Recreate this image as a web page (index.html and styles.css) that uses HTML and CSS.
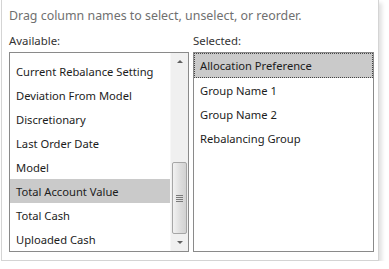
FILE: index.html
```html
<!DOCTYPE html>
<html lang="en">
<head>
  <meta charset="UTF-8" />
  <title>Column Chooser</title>
  <link rel="stylesheet" href="styles.css">
</head>
<body>

<div class="chooser">
  <p class="hint">Drag column names to select, unselect, or reorder.</p>

  <div class="columns">
    <!-- Available columns -->
    <div class="column column-available">
      <div class="column-label">Available:</div>
      <div class="listbox">
        <div class="listbox-view">
          <ul class="items items-scrolled">
            <li>Account Name</li>
            <li>Account Number</li>
            <li>Account Type</li>
            <li>Cash Available</li>
            <li>Current Rebalance Setting</li>
            <li>Deviation From Model</li>
            <li>Discretionary</li>
            <li>Last Order Date</li>
            <li>Model</li>
            <li class="active">Total Account Value</li>
            <li>Total Cash</li>
            <li>Uploaded Cash</li>
          </ul>
        </div>
        <div class="scrollbar">
          <div class="scroll-arrow up"></div>
          <div class="scroll-track">
            <div class="scroll-thumb"><span></span><span></span><span></span><span></span></div>
          </div>
          <div class="scroll-arrow down"></div>
        </div>
      </div>
    </div>

    <!-- Selected columns -->
    <div class="column column-selected">
      <div class="column-label">Selected:</div>
      <div class="listbox">
        <div class="listbox-view">
          <ul class="items">
            <li class="active focused">Allocation Preference</li>
            <li>Group Name 1</li>
            <li>Group Name 2</li>
            <li>Rebalancing Group</li>
          </ul>
        </div>
      </div>
    </div>
  </div>
</div>

</body>
</html>
```

FILE: styles.css
```css
body {
  margin: 0;
  background: #fff;
  font-family: 'Noto Sans', 'Open Sans', sans-serif;
  font-size: 12px;
  color: #222;
}

.chooser {
  box-sizing: border-box;
  margin-left: 1px;
  width: 378px;
  padding: 7px 4px 8px 7px;
  border: 1px solid #d4d4d4;
  border-top: none;
  background: #fff;
  box-shadow: 3px 3px 4px rgba(0,0,0,0.12);
}

.hint {
  margin: 0;
  line-height: 18px;
  font-size: 12.4px;
  color: #707070;
}

.columns {
  display: flex;
  gap: 4px;
  margin-top: 8px;
}

.column-label {
  line-height: 16px;
  margin-bottom: 3px;
  font-size: 11.4px;
  color: #333;
}

.column-available {
  width: 180px;
}

.column-selected {
  width: 181px;
}

.listbox {
  display: flex;
  height: 198px;
  border: 1px solid #8a8a8a;
  background: #fff;
}

.listbox-view {
  flex: 1;
  overflow: hidden;
}

.items {
  list-style: none;
  margin: 0;
  padding: 0;
  font-size: 11.2px;
  color: #1c1c1c;
}

.items-scrolled {
  margin-top: -90px;
}

.items li {
  height: 23px;
  padding-top: 1px;
  line-height: 24px;
  padding-left: 6px;
  white-space: nowrap;
}

.items li.active {
  background: #cacaca;
}

.items li.focused {
  border: 1px dotted #444;
  height: 23px;
  padding-top: 0;
  line-height: 24px;
  padding-left: 5px;
}

/* fake scrollbar */
.scrollbar {
  width: 17px;
  display: flex;
  flex-direction: column;
  background: #f0f0f0;
  border-left: 1px solid #f7f7f7;
}

.scroll-arrow {
  height: 17px;
  display: flex;
  align-items: center;
  justify-content: center;
}

.scroll-arrow::before {
  content: '';
  border-left: 3px solid transparent;
  border-right: 3px solid transparent;
}

.scroll-arrow.up::before {
  border-bottom: 3px solid #606060;
}

.scroll-arrow.down::before {
  border-top: 3px solid #606060;
}

.scroll-track {
  flex: 1;
  display: flex;
  flex-direction: column;
  justify-content: flex-end;
  padding: 0 1px 0 1px;
}

.scroll-thumb {
  height: 70px;
  border: 1px solid #a6a6a6;
  border-radius: 2px;
  background: linear-gradient(to right, #f2f2f2, #dcdcdc 60%, #d2d2d2);
  display: flex;
  flex-direction: column;
  align-items: center;
  justify-content: center;
  gap: 1px;
}

.scroll-thumb span {
  display: block;
  width: 7px;
  height: 1px;
  background: #7a7a7a;
}
```
